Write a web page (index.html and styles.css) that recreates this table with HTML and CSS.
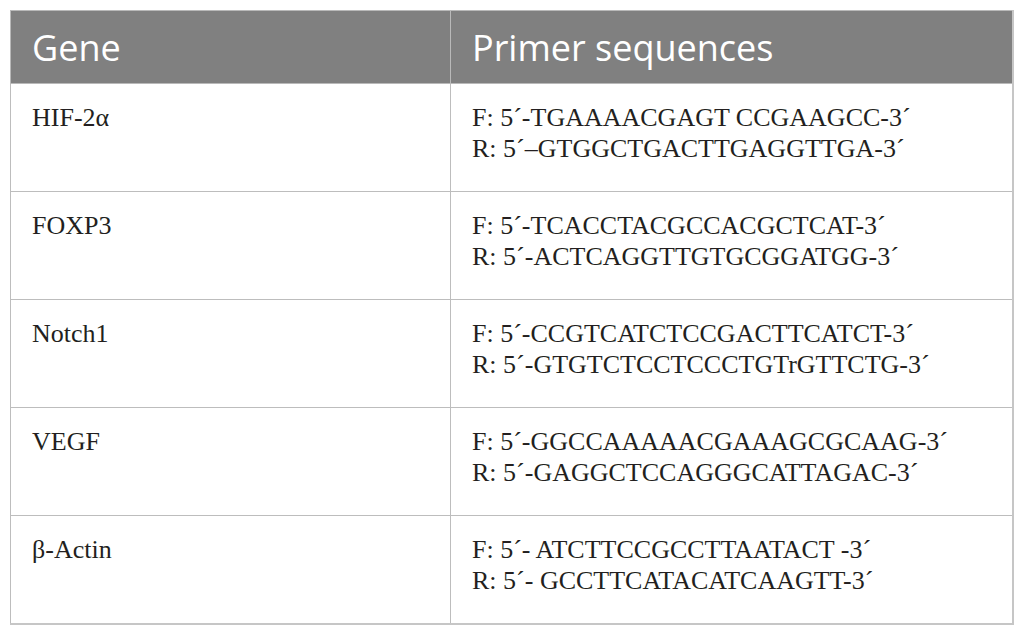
FILE: index.html
```html
<!DOCTYPE html>
<html>
<head>
<meta charset="utf-8">
<link rel="stylesheet" href="styles.css">
</head>
<body>
<div class="wrap">
<table class="primers">
  <thead>
    <tr><th class="c-gene">Gene</th><th class="c-seq">Primer sequences</th></tr>
  </thead>
  <tbody>
    <tr><td>HIF-2α</td><td>F: 5´-TGAAAACGAGT CCGAAGCC-3´<br>R: 5´–GTGGCTGACTTGAGGTTGA-3´</td></tr>
    <tr><td>FOXP3</td><td>F: 5´-TCACCTACGCCACGCTCAT-3´<br>R: 5´-ACTCAGGTTGTGCGGATGG-3´</td></tr>
    <tr><td>Notch1</td><td>F: 5´-CCGTCATCTCCGACTTCATCT-3´<br>R: 5´-GTGTCTCCTCCCTGTrGTTCTG-3´</td></tr>
    <tr><td>VEGF</td><td>F: 5´-GGCCAAAAACGAAAGCGCAAG-3´<br>R: 5´-GAGGCTCCAGGGCATTAGAC-3´</td></tr>
    <tr><td>β-Actin</td><td>F: 5´- ATCTTCCGCCTTAATACT -3´<br>R: 5´- GCCTTCATACATCAAGTT-3´</td></tr>
  </tbody>
</table>
</div>
</body>
</html>
```

FILE: styles.css
```css
html, body {
  margin: 0;
  padding: 0;
  background: #ffffff;
}
.wrap {
  padding: 10px 0 0 10px;
}
.primers {
  width: 1004px;
  border-collapse: collapse;
  table-layout: fixed;
}
.primers th {
  background: #808080;
  color: #ffffff;
  font-family: "Open Sans", sans-serif;
  font-weight: 400;
  font-size: 36px;
  text-align: left;
  height: 73px;
  padding: 0 21px;
  border: 1px solid #b9b9b9;
  box-sizing: border-box;
}
.primers th.c-gene { width: 440px; }
.primers td {
  font-family: "Liberation Serif", "Times New Roman", serif;
  font-size: 26px;
  line-height: 31px;
  color: #231f20;
  vertical-align: top;
  height: 108px;
  box-sizing: border-box;
  padding: 18px 21px 0 21px;
  border: 1px solid #bdbdbd;
}
.primers td:last-child { border-right: 2px solid #c6c6c6; }
.primers tbody tr:last-child td { border-bottom: 2px solid #c6c6c6; }
.primers th:last-child { border-right: 2px solid #c6c6c6; }
```
